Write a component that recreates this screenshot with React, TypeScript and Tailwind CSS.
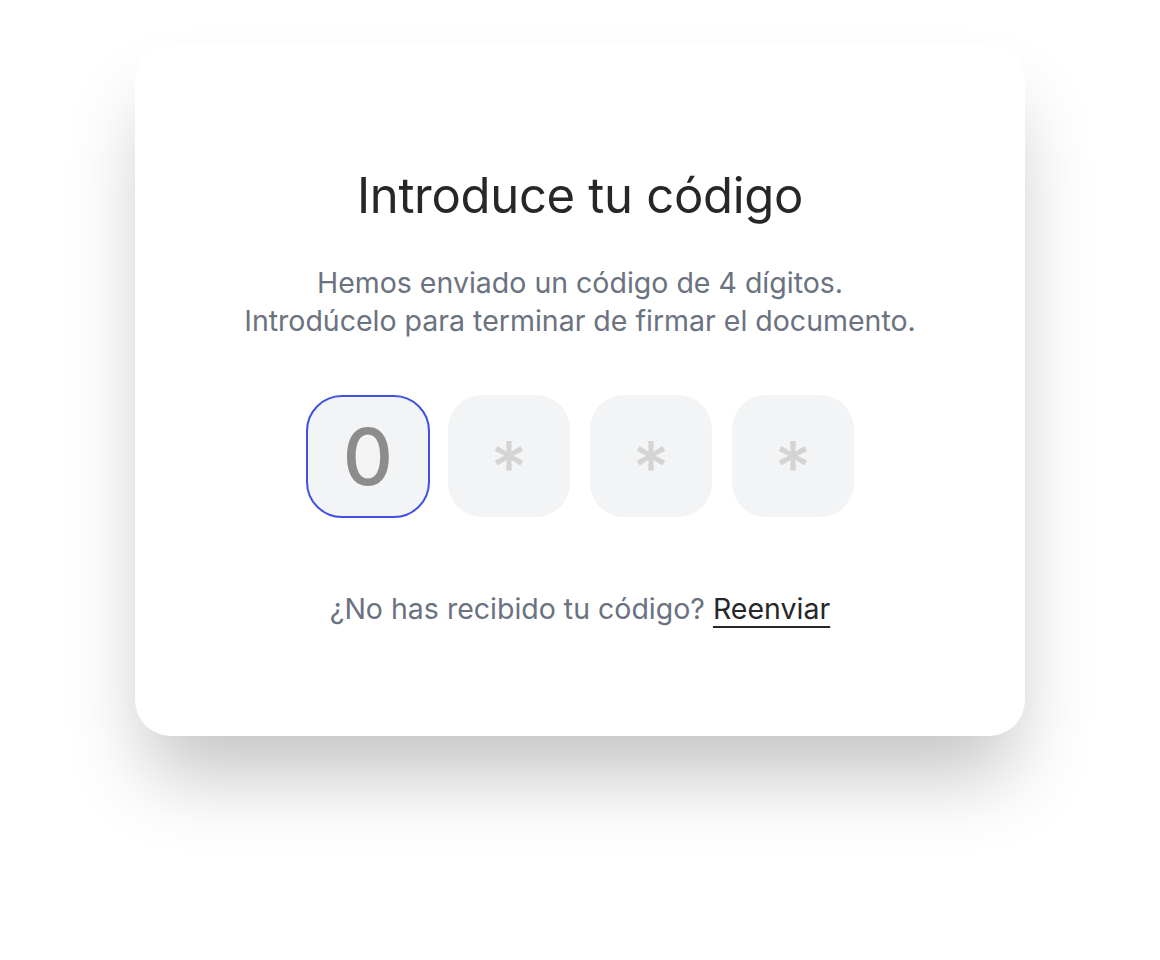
import React from "react";

const digits = ["0", "*", "*", "*"];

export default function App() {
  return (
    <div
      className="min-h-screen w-full bg-white flex justify-center pt-[45px]"
      style={{ fontFamily: "Inter, 'Noto Sans', sans-serif" }}
    >
      <div className="w-[890px] h-[691px] rounded-[36px] bg-white shadow-[0_50px_80px_-12px_rgba(0,0,0,0.24)] flex flex-col items-center pt-[123px]">
        <h1 className="text-[49px] leading-[56px] text-[#27272a] font-normal tracking-[-0.3px]">
          Introduce tu código
        </h1>
        <p className="mt-[40px] text-[28.5px] leading-[38px] text-[#6b7280] text-center">
          Hemos enviado un código de 4 dígitos.
          <br />
          Introdúcelo para terminar de firmar el documento.
        </p>
        <div className="mt-[55px] flex gap-[20px]">
          {digits.map((d, i) =>
            i === 0 ? (
              <div
                key={i}
                className="w-[124px] h-[123px] rounded-[36px] bg-[#f3f4f6] border-[2.5px] border-[#3f51e3] flex items-center justify-center text-[78px] leading-none font-medium text-[#8c8c8c] -mr-[2px]"
              >
                {d}
              </div>
            ) : (
              <div
                key={i}
                className="w-[122px] h-[122px] rounded-[34px] bg-[#f3f4f6] flex items-center justify-center text-[72px] leading-none font-medium text-[#d4d4d4] pt-[22px]"
              >
                {d}
              </div>
            )
          )}
        </div>
        <p className="mt-[72px] text-[28.5px] leading-[38px] text-[#6b7280]">
          ¿No has recibido tu código?{" "}
          <a className="text-[#27272a] underline underline-offset-[7px] decoration-[2px] cursor-pointer">
            Reenviar
          </a>
        </p>
      </div>
    </div>
  );
}
